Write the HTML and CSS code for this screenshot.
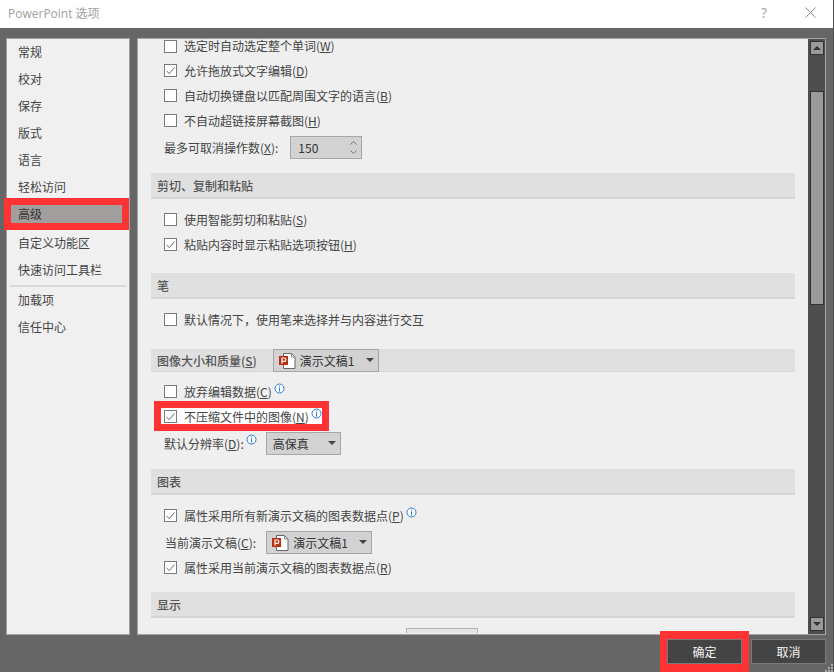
FILE: index.html
```html
<!DOCTYPE html>
<html lang="zh-CN">
<head>
<meta charset="utf-8">
<title>PowerPoint 选项</title>
<link rel="stylesheet" href="styles.css">
</head>
<body>
<svg class="defs" width="0" height="0" aria-hidden="true">
  <symbol id="ppt" viewBox="0 0 17 17">
    <path d="M4.500 1.500h8l3.500 3.500v11.500H4.500z" fill="#fff" stroke="#666" stroke-width="1"/>
    <path d="M12.500 1.500v3.500h3.500" fill="none" stroke="#888" stroke-width="1"/>
    <rect x="0" y="4" width="9" height="9" fill="#b7300f"/>
    <path d="M3 11.500V6h2.200a1.600 1.600 0 0 1 0 3.400H3" fill="none" stroke="#fff" stroke-width="1.200"/>
  </symbol>
  <symbol id="info" viewBox="0 0 11 11">
    <circle cx="5.500" cy="5.500" r="4.500" fill="#fff" stroke="#2b7cd3" stroke-width="1"/>
    <rect x="5" y="2.500" width="1" height="1" fill="#2b7cd3"/>
    <rect x="5" y="4.500" width="1" height="4" fill="#2b7cd3"/>
  </symbol>
  <symbol id="check" viewBox="0 0 13 13">
    <path d="M2.500 7l2.800 2.600L10.500 3.500" fill="none" stroke="#666" stroke-width="1"/>
  </symbol>
</svg>

<div class="window">
  <header class="titlebar">
    <span class="title">PowerPoint 选项</span>
    <span class="help">?</span>
    <svg class="close" width="11" height="11" viewBox="0 0 11 11"><path d="M0.500 0.500l10 10M10.500 0.500l-10 10" stroke="#8a8a8a" stroke-width="1" fill="none"/></svg>
  </header>

  <main class="body">
    <nav class="sidebar">
      <div class="nav-item">常规</div>
      <div class="nav-item">校对</div>
      <div class="nav-item">保存</div>
      <div class="nav-item">版式</div>
      <div class="nav-item">语言</div>
      <div class="nav-item">轻松访问</div>
      <div class="nav-item active">高级</div>
      <div class="nav-item nav-gap">自定义功能区</div>
      <div class="nav-item">快速访问工具栏</div>
      <div class="nav-sep"></div>
      <div class="nav-item">加载项</div>
      <div class="nav-item">信任中心</div>
    </nav>

    <section class="panel">
      <div class="scrollport">
        <div class="content">
          <label class="row first"><span class="cb"></span>选定时自动选定整个单词(<u>W</u>)</label>
          <label class="row"><span class="cb"><svg><use href="#check"/></svg></span>允许拖放式文字编辑(<u>D</u>)</label>
          <label class="row"><span class="cb"></span>自动切换键盘以匹配周围文字的语言(<u>B</u>)</label>
          <label class="row"><span class="cb"></span>不自动超链接屏幕截图(<u>H</u>)</label>
          <div class="row tall">
            <span class="field-label">最多可取消操作数(<u>X</u>):</span>
            <span class="spinner"><span class="spin-value">150</span>
              <svg class="spin-arrows" width="9" height="15" viewBox="0 0 9 15"><path d="M1.500 4.500l3-3 3 3M1.500 10.500l3 3 3-3" fill="none" stroke="#777" stroke-width="1"/></svg>
            </span>
          </div>

          <h2 class="section s1">剪切、复制和粘贴</h2>
          <label class="row"><span class="cb"></span>使用智能剪切和粘贴(<u>S</u>)</label>
          <label class="row"><span class="cb"><svg><use href="#check"/></svg></span>粘贴内容时显示粘贴选项按钮(<u>H</u>)</label>

          <h2 class="section s2">笔</h2>
          <label class="row"><span class="cb"></span>默认情况下，使用笔来选择并与内容进行交互</label>

          <h2 class="section s3">图像大小和质量(<u>S</u>)
            <span class="select doc-select"><svg class="ppt"><use href="#ppt"/></svg><span class="sel-text">演示文稿1</span><span class="caret"></span></span>
          </h2>
          <label class="row"><span class="cb"></span>放弃编辑数据(<u>C</u>)<svg class="info"><use href="#info"/></svg></label>
          <label class="row marked"><span class="cb"><svg><use href="#check"/></svg></span>不压缩文件中的图像(<u>N</u>)<svg class="info"><use href="#info"/></svg></label>
          <div class="row tall res">
            <span class="field-label">默认分辨率(<u>D</u>):<svg class="info"><use href="#info"/></svg></span>
            <span class="select res-select"><span class="sel-text">高保真</span><span class="caret"></span></span>
          </div>

          <h2 class="section s4">图表</h2>
          <label class="row"><span class="cb"><svg><use href="#check"/></svg></span>属性采用所有新演示文稿的图表数据点(<u>P</u>)<svg class="info"><use href="#info"/></svg></label>
          <div class="row tall cur">
            <span class="field-label">当前演示文稿(<u>C</u>):</span>
            <span class="select cur-select"><svg class="ppt"><use href="#ppt"/></svg><span class="sel-text">演示文稿1</span><span class="caret"></span></span>
          </div>
          <label class="row last"><span class="cb"><svg><use href="#check"/></svg></span>属性采用当前演示文稿的图表数据点(<u>R</u>)</label>

          <h2 class="section s5">显示</h2>
          <div class="cut-off"></div>
        </div>
      </div>
      <div class="scrollbar">
        <div class="sb-btn"><span class="tri up"></span></div>
        <div class="sb-thumb"></div>
        <div class="sb-btn sb-down"><span class="tri down"></span></div>
      </div>
    </section>

    <div class="mark-nav"></div>
  </main>

  <footer class="footer">
    <span class="ok-mark"><button class="btn">确定</button></span>
    <button class="btn">取消</button>
    <svg class="grip" width="8" height="8" viewBox="0 0 8 8"><path d="M6 0h2v2H6zM3 3h2v2H3zM6 3h2v2H6zM0 6h2v2H0zM3 6h2v2H3zM6 6h2v2H6z" fill="#aaa"/></svg>
  </footer>
</div>
</body>
</html>
```

FILE: styles.css
```css
*, *::before, *::after { box-sizing: border-box; }
html, body { margin: 0; height: 100%; }
body {
  width: 834px;
  height: 672px;
  overflow: hidden;
  background: #4e4e4e;
  font-family: "Noto Sans CJK SC", "Noto Sans", sans-serif;
  font-size: 12px;
  color: #444;
}
.defs { position: absolute; }
u { text-decoration: underline; text-underline-offset: 1px; }

.window {
  width: 833px;
  height: 672px;
  background: #666;
  display: flex;
  flex-direction: column;
}

/* title bar */
.titlebar {
  height: 28px;
  flex: none;
  background: #fff;
  display: flex;
  align-items: center;
  padding: 0 11px 3px 8px;
}
.title { flex: 1; color: #a0a0a0; font-size: 12px; font-family: "Open Sans", "Noto Sans CJK SC", sans-serif; }
.help { color: #a0a0a0; font-size: 14px; width: 6px; margin-right: 38px; line-height: 1; font-family: "Open Sans", sans-serif; }
.close { display: block; margin-right: 6px; }

/* main */
.body {
  position: relative;
  display: flex;
  align-items: flex-start;
  height: 607px;
  padding: 10px 0 0 6px;
  gap: 7px;
}

.sidebar {
  width: 124px;
  height: 597px;
  background: #f0f0f0;
  border: 1px solid #a3a3a3;
}
.nav-item {
  height: 27px;
  line-height: 25px;
  padding-left: 11px;
  color: #444;
  position: relative;
}
.nav-item.active { color: #333; isolation: isolate; }
.nav-item.active::before {
  content: "";
  position: absolute;
  z-index: -1;
  left: 4px;
  top: 4px;
  width: 111px;
  height: 18px;
  background: #a09f9d;
}
.nav-gap { margin-top: 2px; }
.nav-sep {
  height: 2px;
  margin: 1px 3px 0;
  background: #d9d9d9;
}
.mark-nav {
  position: absolute;
  left: 4px;
  top: 170px;
  width: 125px;
  height: 32px;
  border: 7px solid #ff3333;
  pointer-events: none;
}

.panel {
  width: 689px;
  height: 597px;
  background: #efefef;
  border: 1px solid #a3a3a3;
  display: flex;
}
.scrollport { width: 670px; height: 595px; }
.content { padding-left: 13px; width: 657px; }

.row {
  display: flex;
  align-items: center;
  height: 25px;
  padding-left: 13px;
  white-space: nowrap;
}
.row.first { height: 19px; padding-bottom: 5px; line-height: 14px; }
.tall { height: 28px; }
.cb {
  flex: none;
  width: 13px;
  height: 13px;
  background: #fff;
  border: 1px solid #7a7a7a;
  margin-right: 7px;
  position: relative;
}
.cb svg { position: absolute; left: -1px; top: -1px; width: 13px; height: 13px; }
.info { width: 11px; height: 11px; margin: -7px 0 0 2px; flex: none; }
.field-label { display: inline-flex; align-items: center; }

.marked {
  position: relative;
  background: linear-gradient(#fff, #fff) 10px 4px / 162px 16px no-repeat;
}
.marked::before {
  content: "";
  position: absolute;
  left: 3px;
  top: -3px;
  width: 175px;
  height: 30px;
  border: 7px solid #ff3333;
}

.spinner {
  width: 72px;
  height: 23px;
  margin-left: 12px;
  background: #d2d2d2;
  border: 1px solid #a6a6a6;
  display: flex;
  align-items: center;
  justify-content: space-between;
  padding: 0 3px 0 7px;
  color: #333;
}
.spin-arrows { display: block; }

.section {
  margin: 0;
  height: 26px;
  padding-left: 6px;
  font-size: 12px;
  font-weight: 500;
  color: #555;
  background: #e0e0e0;
  border-bottom: 2px solid #d6d6d6;
  display: flex;
  align-items: center;
  white-space: nowrap;
}
.s1 { margin: 12px 0 8px; }
.s2 { margin: 16px 0 8px; }
.s3 { margin: 17px 0 7px; height: 23px; border-bottom-width: 1px; }
.s4 { margin: 12px 0 8px; }
.s5 { margin: 12px 0 10px; }
.last { margin-top: -1px; }

.select {
  display: inline-flex;
  align-items: center;
  height: 23px;
  background: #d2d2d2;
  border: 1px solid #a6a6a6;
  color: #333;
  font-weight: 400;
  flex: none;
}
.ppt { width: 17px; height: 17px; margin-right: 4px; flex: none; }
.sel-text { flex: 1; }
.caret {
  width: 0; height: 0;
  border-left: 4px solid transparent;
  border-right: 4px solid transparent;
  border-top: 4px solid #444;
}
.doc-select { width: 106px; margin-left: 16px; padding: 0 4px 0 5px; }
.res-select { width: 75px; margin-left: 9px; padding: 0 4px 0 6px; }
.res { padding-left: 13px; }
.cur { padding-left: 14px; }
.cur-select { width: 106px; margin-left: 10px; padding: 0 4px 0 5px; }

.cut-off {
  width: 72px;
  height: 5px;
  margin-left: 255px;
  background: #e4e4e4;
  border: 1px solid #b5b5b5;
  border-bottom: 0;
}

/* scrollbar */
.scrollbar {
  width: 17px;
  height: 595px;
  background: #4e4e4e;
  padding: 2px 1px 3px 2px;
  display: flex;
  flex-direction: column;
}
.sb-btn {
  height: 14px;
  flex: none;
  background: #9a9a9a;
  border: 1px solid #333;
  display: flex;
  align-items: center;
  justify-content: center;
}
.sb-thumb {
  height: 214px;
  margin-top: 36px;
  background: #9a9a9a;
  border: 1px solid #333;
}
.sb-down { margin-top: auto; }
.tri { width: 0; height: 0; border-left: 4px solid transparent; border-right: 4px solid transparent; }
.tri.up { border-bottom: 4px solid #333; }
.tri.down { border-top: 4px solid #333; }

/* footer */
.footer {
  position: relative;
  flex: 1;
  display: flex;
  align-items: flex-start;
  gap: 9px;
  padding: 4px 7px 0 660px;
}
.btn {
  width: 75px;
  height: 25px;
  background: #444;
  border: 1px solid #7a7a7a;
  color: #f5f5f5;
  font: inherit;
  padding: 0;
}
.ok-mark {
  flex: none;
  width: 89px;
  height: 41px;
  margin-top: -8px;
  margin-right: -7px;
  border: 7px solid #ff3333;
  border-bottom-width: 8px;
  background: #ff3333;
  display: block;
}
.ok-mark .btn { display: block; margin-top: 1px; }
.grip { position: absolute; right: 0; bottom: 0; }
```
